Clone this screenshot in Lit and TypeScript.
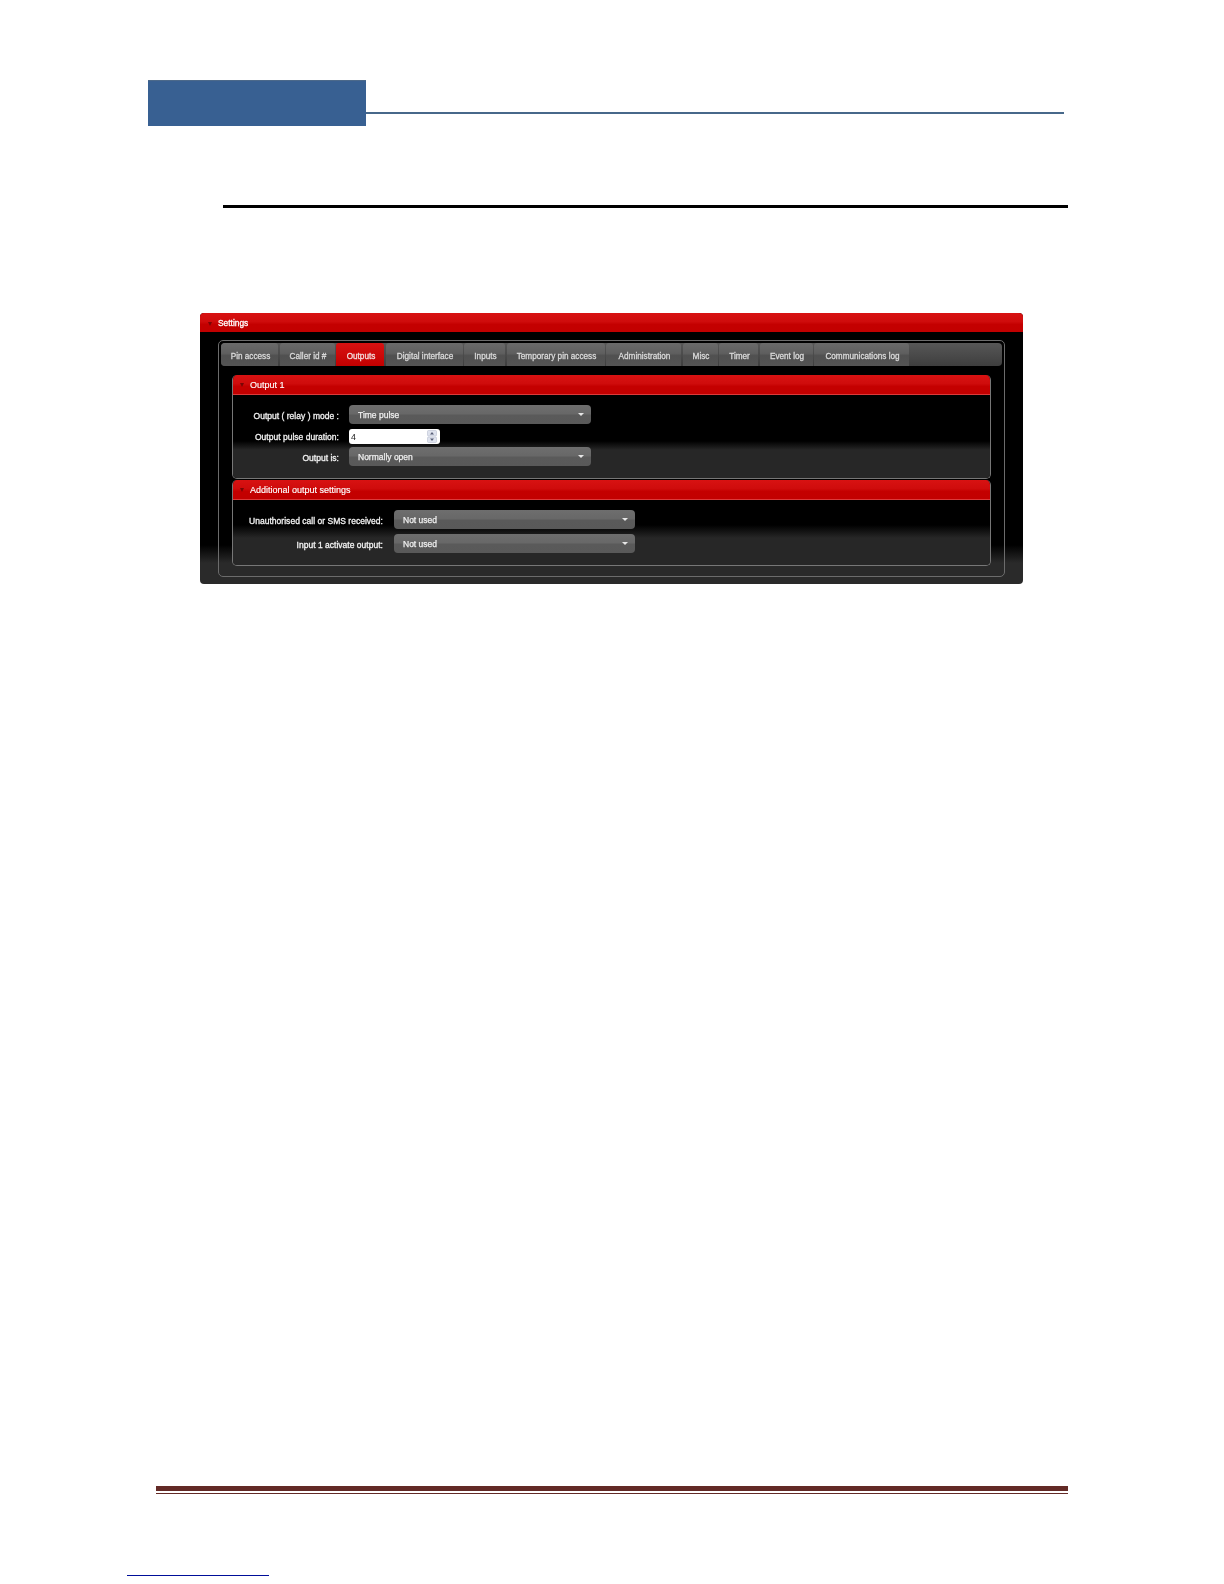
import { LitElement, html, css } from "lit";
import { customElement } from "lit/decorators.js";

const TABS: [string, number, boolean?][] = [
  ["Pin access", 57],
  ["Caller id #", 55],
  ["Outputs", 48, true],
  ["Digital interface", 77],
  ["Inputs", 41],
  ["Temporary pin access", 98],
  ["Administration", 75],
  ["Misc", 35],
  ["Timer", 39],
  ["Event log", 53],
  ["Communications log", 95],
];

@customElement("app-root")
export class AppRoot extends LitElement {
  static styles = css`
    :host { display: block; width: 1224px; height: 1584px; background: #fff; overflow: hidden;
      font-family: "Liberation Sans", Arial, sans-serif; }
    .band { display: flex; align-items: flex-start; margin: 80px 160px 0 148px; }
    .band-box { width: 218px; height: 46px; background: #386092; box-shadow: inset 0 2px 1px -1px #4f6b8a; }
    .band-line { flex: 1; height: 2px; margin-top: 32px; background: #47688a; }
    .rule { height: 3px; margin: 79px 156px 0 223px; background: #000; }

    .panel { width: 823px; height: 271px; box-sizing: border-box; margin: 105px 0 0 200px;
      border-radius: 4px; display: flex; flex-direction: column; overflow: hidden; filter: blur(0.3px);
      background: linear-gradient(180deg, #000 0, #000 232px, #2a2a2a 250px, #2a2a2a 100%); }
    .head { display: flex; align-items: center; flex: none; box-sizing: border-box;
      background: linear-gradient(180deg, #d81212 0%, #cf0c0c 45%, #c40000 60%, #c20000 100%); }
    .panel > .head { height: 19px; padding: 2px 0 0 8px; }
    .tri { width: 0; height: 0; border-left: 2.5px solid transparent; border-right: 2.5px solid transparent;
      border-top: 4px solid #7a0505; margin-right: 6px; flex: none; }
    .head-title { color: #fff; font-size: 8.4px; font-weight: 400; line-height: 1; -webkit-text-stroke: 0.3px #fff; }

    .field { flex: 1; margin: 8px 18px 7px 18px; border: 1px solid #6c6c6c; border-radius: 5px;
      padding: 2px 2px 0 2px; display: flex; flex-direction: column; }
    .tabs { height: 23px; flex: none; display: flex; gap: 1.5px; border-radius: 4px; overflow: hidden;
      background: linear-gradient(180deg, #575757, #3e3e3e); }
    .tab { box-sizing: border-box; flex: none; display: flex; align-items: center; justify-content: center;
      padding: 4px 0 0 2px; font-size: 8.2px; color: #dadada; -webkit-text-stroke: 0.3px #dadada; white-space: nowrap;
      border-radius: 3px 3px 0 0;
      background: linear-gradient(180deg, #6a6a6a 0%, #5f5f5f 45%, #505050 55%, #545454 100%); }
    .tab.on { color: #f4dcdc; -webkit-text-stroke-color: #f4dcdc; background: linear-gradient(180deg, #d81212, #c20000); }

    .sec { margin: 9px 11px 0 11px; border: 1px solid #777; border-top: 0; border-radius: 5px;
      display: flex; flex-direction: column; overflow: hidden; }
    .sec + .sec { margin-top: 1px; }
    .sec .head { height: 20px; padding: 1px 0 0 8px; border-bottom: 1px solid #dc3a3a; margin: 0 -1px; border-radius: 4px 4px 0 0; }
    .sec .tri { margin-right: 5px; }
    .sec .head-title { color: #fff; margin-left: 1px; font-size: 9px; -webkit-text-stroke: 0.15px #fff; }
    .sec.a .body { height: 73px; padding-top: 10px; background: linear-gradient(180deg, #000 0, #000 46px, #272727 55px, #272727 100%); }
    .sec.b .body { height: 55px; padding-top: 10px; background: linear-gradient(180deg, #000 0, #000 25px, #272727 38px, #272727 100%); }
    .sec.a .grid { display: grid; grid-template-columns: 106px 242px; column-gap: 10px; row-gap: 3px; align-items: center; }
    .sec.b .grid { display: grid; grid-template-columns: 150px 241px; column-gap: 11px; row-gap: 5px; align-items: center; }
    .lbl { text-align: right; color: #f2f2f2; font-size: 8.5px; letter-spacing: 0.02px; -webkit-text-stroke: 0.3px #f2f2f2; white-space: nowrap; line-height: 1; padding-top: 4px; }
    .sel { height: 19px; box-sizing: border-box; border-radius: 4px; display: flex; align-items: center;
      justify-content: space-between; padding: 0 7px 0 9px; color: #f0f0f0; font-size: 8.5px; -webkit-text-stroke: 0.25px #f0f0f0;
      background: linear-gradient(180deg, #6e6e6e 0%, #686868 45%, #5a5a5a 55%, #595959 100%); }
    .arrow { width: 0; height: 0; border-left: 3px solid transparent; border-right: 3px solid transparent;
      border-top: 3px solid #e6e6e6; }
    .spin-wrap { margin-top: 2px; width: 91px; height: 15px; box-sizing: border-box; border-radius: 3px; background: #fff;
      display: flex; align-items: center; justify-content: space-between; padding: 0 3px 0 2px;
      color: #222; font-size: 8.8px; }
    .spin-wrap svg { display: block; }

    .foot-a { height: 5px; margin: 902px 156px 0 156px; background: #632a26; }
    .foot-b { height: 1px; margin: 2px 156px 0 156px; background: #632a26; }
    .link { height: 1px; width: 142px; margin: 81px 0 0 127px; background: #000e99; }
  `;

  private row(label: string, value: string) {
    return html`<div class="lbl">${label}</div>
      <div class="sel"><span>${value}</span><span class="arrow"></span></div>`;
  }

  render() {
    return html`
      <div class="band"><div class="band-box"></div><div class="band-line"></div></div>
      <div class="rule"></div>
      <div class="panel">
        <div class="head"><span class="tri"></span><span class="head-title">Settings</span></div>
        <div class="field">
          <div class="tabs">
            ${TABS.map(
              ([t, w, on]) => html`<div class="tab ${on ? "on" : ""}" style="width:${w}px">${t}</div>`
            )}
          </div>
          <div class="sec a">
            <div class="head"><span class="tri"></span><span class="head-title">Output 1</span></div>
            <div class="body">
              <div class="grid">
                ${this.row("Output ( relay ) mode :", "Time pulse")}
                <div class="lbl">Output pulse duration:</div>
                <div class="spin-wrap">
                  <span>4</span>
                  <svg width="10" height="13" viewBox="0 0 10 13">
                    <rect x="0.5" y="0.5" width="9" height="5.5" rx="1" fill="#dfe3ee" stroke="#b9bfd2" stroke-width=".6" />
                    <rect x="0.5" y="7" width="9" height="5.5" rx="1" fill="#dfe3ee" stroke="#b9bfd2" stroke-width=".6" />
                    <path d="M5 2 7 4.4H3zM5 11 3 8.6H7z" fill="#5a6178" />
                  </svg>
                </div>
                ${this.row("Output is:", "Normally open")}
              </div>
            </div>
          </div>
          <div class="sec b">
            <div class="head"><span class="tri"></span><span class="head-title">Additional output settings</span></div>
            <div class="body">
              <div class="grid">
                ${this.row("Unauthorised call or SMS received:", "Not used")}
                ${this.row("Input 1 activate output:", "Not used")}
              </div>
            </div>
          </div>
        </div>
      </div>
      <div class="foot-a"></div>
      <div class="foot-b"></div>
      <div class="link"></div>
    `;
  }
}
